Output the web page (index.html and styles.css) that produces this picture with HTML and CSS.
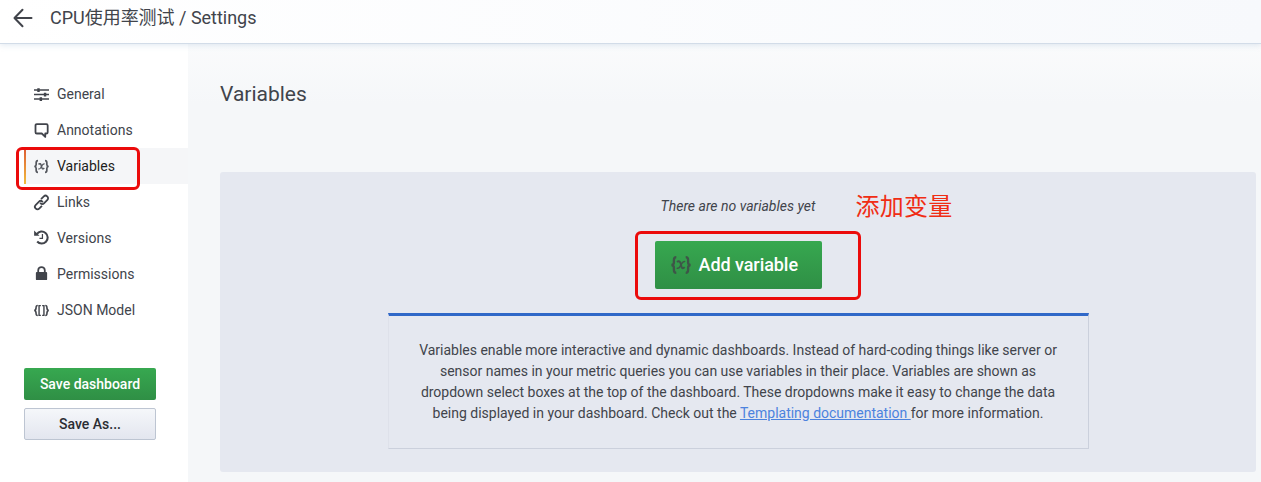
FILE: index.html
```
<!DOCTYPE html>
<html lang="zh">
<head>
<meta charset="utf-8">
<title>Settings</title>
<link rel="stylesheet" href="styles.css">
</head>
<body>
<svg class="defs" width="0" height="0">
  <symbol id="var-icon" viewBox="0 0 20 18">
    <path d="M5.300 1.200C3.100 1.200 2.900 2.200 2.900 4v2.400C2.900 8 2.300 8.800.500 9c1.800.2 2.400 1 2.400 2.600V14c0 1.800.2 2.800 2.400 2.800M14.700 1.200c2.200 0 2.400 1 2.400 2.800v2.400c0 1.600.6 2.400 2.400 2.600-1.800.2-2.400 1-2.400 2.600V14c0 1.800-.2 2.800-2.400 2.800" fill="none" stroke="currentColor" stroke-width="2.300"/>
    <path d="M6 6.100c1.800-1.500 3.100-.7 3.600 1.200l.8 3.200c.5 1.900 1.700 2.300 3.300.6" fill="none" stroke="currentColor" stroke-width="2"/>
    <path d="M14.200 5.600c-1.500-.5-2.700.5-3.700 2.300L9.200 10.300c-.9 1.700-1.900 2.500-3.500 1.800" fill="none" stroke="currentColor" stroke-width="1.500"/>
  </symbol>
</svg>
<header class="navbar">
  <svg class="back" viewBox="0 0 20 20"><path d="M18.500 10H2M9.500 1.800L1.500 10l8 8.200" fill="none" stroke="currentColor" stroke-width="2" stroke-linecap="round" stroke-linejoin="round"/></svg>
  <span class="crumb">CPU使用率测试 / Settings</span>
</header>
<div class="layout">
  <aside class="sidebar">
    <nav class="menu">
      <a class="item"><svg class="icon" viewBox="0 0 16 16"><path d="M0 3.200h16M0 8h16M0 12.800h16" stroke="currentColor" stroke-width="1.700"/><path d="M3.500 1.200h2.600v4H3.500zM10.500 6h2.600v4h-2.600zM6 10.800h2.600v4H6z" fill="currentColor"/></svg>General</a>
      <a class="item"><svg class="icon" viewBox="0 0 16 16"><path d="M3 1.200h10.200q1.400 0 1.400 1.400v7.200q0 1.400-1.400 1.400H12v3.600L8.300 11.200H3q-1.400 0-1.400-1.400V2.600Q1.600 1.200 3 1.200z" fill="none" stroke="currentColor" stroke-width="1.900" stroke-linejoin="round"/></svg>Annotations</a>
      <a class="item active"><svg class="icon"><use href="#var-icon"/></svg>Variables<span class="marker marker-menu"></span></a>
      <a class="item"><svg class="icon" viewBox="0 0 16 16"><g transform="rotate(-45 8 8)" fill="none" stroke="currentColor" stroke-width="1.900"><path d="M5.800 10.900H1.600A2.500 2.500 0 0 1-.9 8.400V8a2.500 2.500 0 0 1 2.500-2.500h5.200A2.500 2.500 0 0 1 9.300 8v.8"/><path d="M10.200 5.100h4.200a2.500 2.500 0 0 1 2.500 2.500V8a2.500 2.500 0 0 1-2.500 2.500H9.200A2.500 2.500 0 0 1 6.700 8v-.8"/></g></svg>Links</a>
      <a class="item"><svg class="icon icon-up" viewBox="0 0 16 16"><path d="M3 4.300A6.400 6.400 0 1 1 3.400 12.300" fill="none" stroke="currentColor" stroke-width="2.200"/><path d="M.1.600v5.600h5.800z" fill="currentColor"/><path d="M9 4.200v4.700H5.800" fill="none" stroke="currentColor" stroke-width="1.300"/></svg>Versions</a>
      <a class="item"><svg class="icon icon-up" viewBox="0 0 16 16"><rect x="2" y="6.500" width="12" height="8.500" rx="1" fill="currentColor"/><path d="M4.500 7V4.600a3.500 3.500 0 0 1 7 0V7" fill="none" stroke="currentColor" stroke-width="1.900"/></svg>Permissions</a>
      <a class="item"><svg class="icon" viewBox="0 0 16 16"><path d="M4 2.700C2.200 2.700 2.200 3.400 2.200 5.100S2 7.700.3 8c1.700.3 1.900 1.200 1.900 2.900s0 2.400 1.800 2.400M12 2.700c1.800 0 1.800.7 1.800 2.400s.2 2.600 1.900 2.900c-1.700.3-1.900 1.200-1.900 2.900s0 2.400-1.800 2.400" fill="none" stroke="currentColor" stroke-width="1.700"/><path d="M7.300 2.800H5.400v10.400h1.900M8.700 2.800h1.900v10.400H8.700" fill="none" stroke="currentColor" stroke-width="1.500"/></svg>JSON Model</a>
    </nav>
    <div class="actions">
      <button class="btn btn-green">Save dashboard</button>
      <button class="btn btn-plain">Save As...</button>
    </div>
  </aside>
  <main class="content">
    <h1 class="title">Variables</h1>
    <section class="empty">
      <div class="empty-title">There are no variables yet<span class="note">添加变量</span></div>
      <div class="cta-row">
        <button class="cta"><svg class="cta-icon"><use href="#var-icon"/></svg>Add variable</button>
        <span class="marker marker-cta"></span>
      </div>
      <div class="info">
        <p class="info-text">Variables enable more interactive and dynamic dashboards. Instead of hard-coding things like server or<br>sensor names in your metric queries you can use variables in their place. Variables are shown as<br>dropdown select boxes at the top of the dashboard. These dropdowns make it easy to change the data<br>being displayed in your dashboard. Check out the <a class="link">Templating documentation </a>for more information.</p>
      </div>
    </section>
  </main>
</div>
</body>
</html>
```
FILE: styles.css
```
* { box-sizing: border-box; }
body {
  margin: 0;
  height: 482px;
  overflow: hidden;
  display: flex;
  flex-direction: column;
  background: #f5f7fa;
  color: #41444b;
  font: 14px/21px Roboto, "Noto Sans CJK SC", sans-serif;
}
.defs { position: absolute; }
.navbar {
  position: relative;
  flex: none;
  height: 44px;
  display: flex;
  align-items: center;
  gap: 17px;
  padding: 0 0 8px 13px;
  background: linear-gradient(90deg, #fff, #f7f9fc);
  border-bottom: 1px solid #d2dce8;
  box-shadow: 0 1px 6px rgba(150, 175, 205, .3);
}
.back { width: 20px; height: 20px; }
.crumb { font-size: 18px; white-space: nowrap; letter-spacing: -.02px; }
.layout { flex: 1; display: flex; }
.sidebar { width: 188px; background: #fff; padding-top: 32px; }
.menu { display: flex; flex-direction: column; }
.item {
  position: relative;
  height: 36px;
  margin-left: 24px;
  padding-left: 10px;
  display: flex;
  align-items: center;
  gap: 8px;
}
.icon { width: 15px; height: 15px; overflow: visible; }
.icon-up { margin-bottom: 2px; }
.active { background: #f5f6f8; color: #1c1d21; }
.active::before {
  content: "";
  position: absolute;
  left: 0;
  top: 0;
  width: 2px;
  height: 36px;
  background: linear-gradient(#dc5a35, #f2bd3c);
}
.active .icon { color: #53565d; }
.marker { position: absolute; border: 3px solid #eb0b0b; border-radius: 6px; }
.marker-menu { left: -8px; top: -1px; width: 124px; height: 43px; }
.actions {
  display: flex;
  flex-direction: column;
  gap: 8px;
  width: 132px;
  margin: 40px 0 0 24px;
}
.btn {
  height: 32px;
  padding: 0;
  border: 0;
  border-radius: 2px;
  font: 500 14px/20px Roboto, sans-serif;
}
.btn-green { background: linear-gradient(#37a850, #2f8f45); color: #fff; }
.btn-plain { background: linear-gradient(#f5f7fa, #e3e6ef); border: 1px solid #bdc5d2; color: #2b2d33; }
.content {
  flex: 1;
  padding: 34px 5px 0 32px;
  background: linear-gradient(#fafbfc, #f5f7f9 60px);
}
.title { margin: 0; font-size: 21px; font-weight: 400; line-height: 32px; }
.empty {
  height: 300px;
  margin-top: 62px;
  padding-top: 24px;
  display: flex;
  flex-direction: column;
  align-items: center;
  background: #e5e8f0;
  border-radius: 3px;
}
.empty-title { position: relative; font-style: italic; line-height: 21px; }
.note {
  position: absolute;
  left: 195px;
  top: -7px;
  font: 24px/32px "Noto Sans CJK SC", sans-serif;
  letter-spacing: .2px;
  color: #f02d14;
  white-space: nowrap;
}
.cta-row { position: relative; margin-top: 24px; }
.cta {
  width: 167px;
  height: 48px;
  display: flex;
  align-items: center;
  gap: 8px;
  padding: 0 0 0 16px;
  border: 0;
  border-radius: 2px;
  background: linear-gradient(#37a850, #2f8f45);
  color: #fff;
  font: 500 18px/24px Roboto, sans-serif;
  letter-spacing: -.06px;
}
.cta-icon { width: 20px; height: 18px; color: #3e5548; overflow: visible; }
.marker-cta { left: -20px; top: -10px; width: 226px; height: 69px; }
.info {
  width: 701px;
  height: 136px;
  margin-top: 24px;
  padding-top: 24px;
  border: 1px solid #cbd0dc;
  border-top: 3px solid #3068c8;
  border-left-color: #dee1ea;
}
.info-text { margin: 0; text-align: center; white-space: nowrap; letter-spacing: -.01px; }
.link { color: #4c83de; text-decoration: underline; }
```
